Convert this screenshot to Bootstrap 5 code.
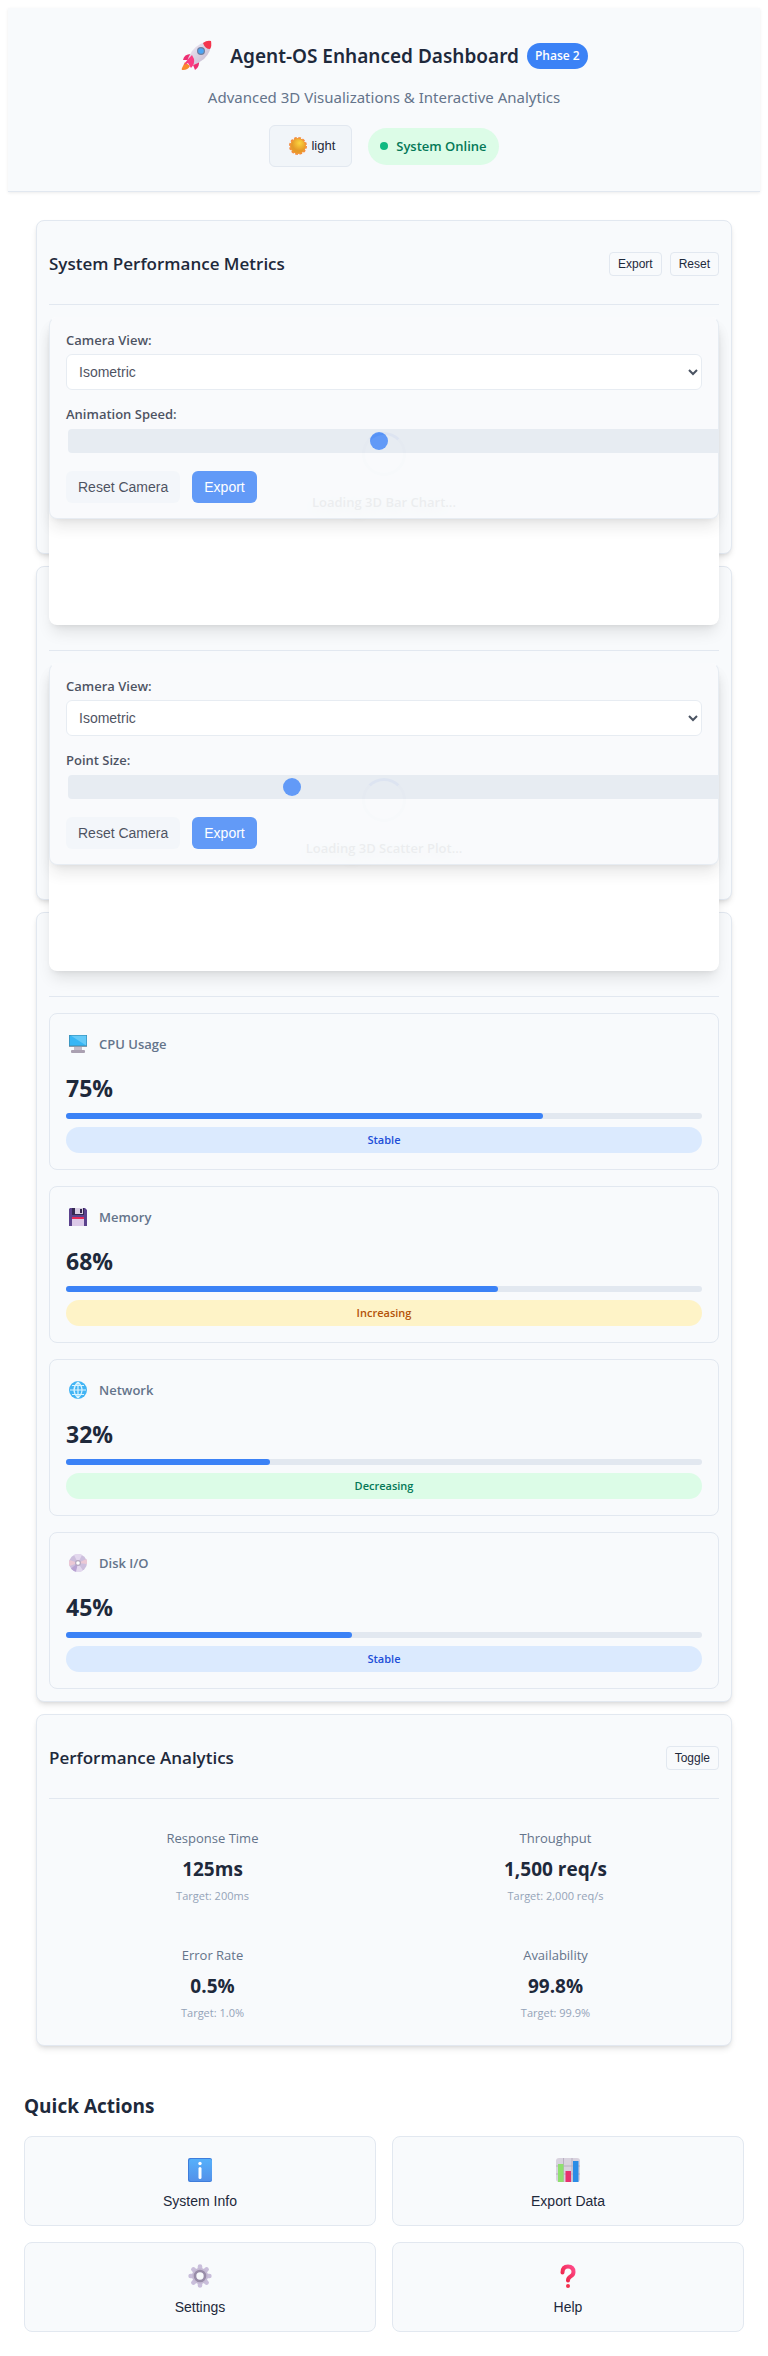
<!DOCTYPE html>
<html lang="en">
<head>
<meta charset="utf-8">
<meta name="viewport" content="width=device-width, initial-scale=1">
<title>Agent-OS Enhanced Dashboard</title>
<link href="https://cdn.jsdelivr.net/npm/bootstrap@5.3.0/dist/css/bootstrap.min.css" rel="stylesheet">
<style>
  :root { --line: #e2e8f0; --surface: #f8fafc; --ink: #1e293b; --muted: #64748b; --accent: #3b82f6; }
  body { background: #fff; color: var(--ink); font-family: "Open Sans", "Noto Sans", sans-serif; font-size: 14px; line-height: 20px; }
  button, select { font-family: "Liberation Sans", Arial, sans-serif; }
  h1, h2, h3, p { margin: 0; }
  svg { display: block; flex: none; }

  .page-header { background: var(--surface); border-bottom: 1px solid var(--line); box-shadow: 0 1px 3px rgba(0,0,0,.08); padding: 32px 16px 24px; }
  .page-title { font-family: "Noto Sans", sans-serif; font-size: 19px; line-height: 32px; font-weight: 600; }
  .phase { background: var(--accent); color: #fff; font-size: 12px; line-height: 18px; font-weight: 600; padding: 4px 8px; border-radius: 13px; }
  .subtitle { font-family: "Noto Sans", sans-serif; color: var(--muted); font-size: 15px; line-height: 24px; margin: 13px 0 16px; }
  .theme-btn { background: #f1f5f9; border: 1px solid var(--line); border-radius: 6px; color: var(--ink); font-size: 13px; height: 42px; padding: 0 16px 0 19px; }
  .status { background: #dcfce7; color: #047857; font-size: 13px; font-weight: 600; height: 37px; padding: 0 12px; border-radius: 19px; }
  .status i { width: 8px; height: 8px; border-radius: 50%; background: #10b981; }

  .panels { padding: 28px 28px 0; gap: 12px; }
  .panel { background: var(--surface); border: 1px solid var(--line); border-radius: 8px; padding: 12px; box-shadow: 0 4px 6px -1px rgba(0,0,0,.1), 0 2px 4px -2px rgba(0,0,0,.1); }
  .panel-head { height: 72px; padding-bottom: 9px; border-bottom: 1px solid var(--line); }
  .panel-head h2 { font-size: 17px; line-height: 24px; font-weight: 600; }
  .tool-btn { background: var(--surface); border: 1px solid var(--line); border-radius: 4px; color: var(--ink); font-size: 12px; height: 24px; padding: 0 8px; }

  .chart-slot { height: 224px; margin-top: 12px; }
  .stage { position: relative; z-index: 1; height: 308px; background: #fff; border-radius: 8px; box-shadow: 0 10px 15px -3px rgba(0,0,0,.1), 0 4px 6px -4px rgba(0,0,0,.1); }
  .loader { position: absolute; inset: 0; padding-top: 115px; color: #bbb; font-size: 13px; font-weight: 600; gap: 16px; }
  .ring { width: 44px; height: 44px; border: 3px solid #f3f5f9; border-top-color: #cbd8f6; border-radius: 50%; }
  .loader span { text-shadow: 0 4px 12px rgba(0,0,0,.2); }
  .controls { position: relative; opacity: .8; background: var(--surface); border: 1px solid var(--line); border-top-color: var(--surface); border-radius: 8px; padding: 12px 16px 15px; overflow: hidden; box-shadow: 0 10px 15px -3px rgba(0,0,0,.12), 0 4px 6px -4px rgba(0,0,0,.1); }
  .controls label { display: block; font-size: 13px; line-height: 20px; font-weight: 600; margin-bottom: 4px; }
  .controls select { display: block; width: 100%; height: 36px; background: #fff; border: 1px solid var(--line); border-radius: 6px; color: var(--ink); font-size: 14px; padding: 0 8px; margin-bottom: 14px; }
  .controls input { -webkit-appearance: none; appearance: none; display: block; width: calc(100% + 18px); height: 24px; background: var(--line); border-radius: 4px; padding: 0 9px; margin: 5px 2px 18px; }
  .controls input::-webkit-slider-thumb { -webkit-appearance: none; width: 18px; height: 18px; border-radius: 50%; background: var(--accent); }
  .cam-row { gap: 12px; }
  .cam-btn { border: 0; border-radius: 6px; height: 32px; padding: 0 12px; font-size: 14px; background: #f1f5f9; color: var(--ink); }
  .cam-btn.go { background: var(--accent); color: #fff; }

  .stack { display: grid; gap: 16px; margin-top: 16px; }
  .metric { border: 1px solid var(--line); border-radius: 8px; padding: 16px; }
  .metric-head { height: 28px; gap: 12px; padding-left: 3px; color: var(--muted); font-weight: 600; font-size: 13px; }
  .metric-value { font-size: 23px; line-height: 38px; font-weight: 700; margin: 11px 0 6px; }
  .meter { height: 6px; background: var(--line); border-radius: 3px; margin-bottom: 8px; }
  .meter div { height: 6px; background: var(--accent); border-radius: 3px; }
  .trend { border-radius: 13px; font-size: 11px; line-height: 26px; font-weight: 600; text-align: center; }
  .steady { background: #dbeafe; color: #1d4ed8; }
  .rising { background: #fef3c7; color: #b45309; }
  .falling { background: #dcfce7; color: #047857; }

  .stat { padding: 12px; text-align: center; }
  .stat-name { color: var(--muted); font-size: 13px; line-height: 22px; margin-bottom: 4px; }
  .stat-value { font-size: 19px; line-height: 32px; font-weight: 700; margin-bottom: 2px; }
  .stat-goal { color: #94a3b8; font-size: 11px; line-height: 17px; }

  .actions { padding: 44px 16px 16px; }
  .actions h2 { font-size: 19px; line-height: 32px; font-weight: 700; margin-bottom: 14px; }
  .two-up { display: grid; grid-template-columns: 1fr 1fr; gap: 16px; }
  .action { background: var(--surface); border: 1px solid var(--line); border-radius: 8px; color: var(--ink); font-size: 14px; line-height: 20px; height: 90px; padding: 21px 0 0; gap: 9px; }
</style>
</head>
<body class="p-2">
<header class="page-header d-flex flex-column align-items-center">
  <div class="d-flex align-items-center">
    <svg width="34" height="32" viewBox="0 0 34 32" class="me-3">
      <defs><linearGradient id="hull" x1="0" y1="0" x2="1" y2="1"><stop stop-color="#f4eef8"/><stop offset="1" stop-color="#bfb4cb"/></linearGradient></defs>
      <path d="M5 22 L2 28 Q1 30 3 30 Q8 30 10 26 Z" fill="#f98a2c"/>
      <path d="M11 14 Q4 14 3 20 L8 20 Z M19 20 Q20 27 15 30 L13 25 Z" fill="#ed2f72"/>
      <path d="M31 1 Q19 2 12 11 Q8 17 7 22 L11 26 Q18 24 24 19 Q32 11 31 1Z" fill="url(#hull)"/>
      <path d="M31 1 Q27 0 23 3 Q25 9 30 9 Q32 6 31 1Z" fill="#f4354d"/>
      <path d="M12 15 Q6 21 4 25 L8 23 L11 28 Q15 24 14 19Z" fill="#fb3b83"/>
      <circle cx="21" cy="11" r="4" fill="#6e7f9f"/><circle cx="21" cy="11" r="2.800" fill="#4ba5f5"/>
    </svg>
    <h1 class="page-title">Agent-OS Enhanced Dashboard</h1>
    <span class="phase ms-2">Phase 2</span>
  </div>
  <p class="subtitle">Advanced 3D Visualizations &amp; Interactive Analytics</p>
  <div class="d-flex align-items-center gap-3">
    <button type="button" class="theme-btn d-flex align-items-center gap-1">
      <svg width="18" height="18" viewBox="0 0 18 18"><defs><radialGradient id="sun" cx=".6" cy=".3"><stop stop-color="#fcd53f"/><stop offset="1" stop-color="#e59a28"/></radialGradient></defs><circle cx="9" cy="9" r="8" fill="none" stroke="#f48a3d" stroke-width="2" stroke-dasharray="2.6 1.6"/><circle cx="9" cy="9" r="7.500" fill="url(#sun)" stroke="#f39a36"/></svg>
      light
    </button>
    <div class="status d-flex align-items-center gap-2"><i></i>System Online</div>
  </div>
</header>

<main>
  <div class="panels d-grid">
    <section class="panel">
      <div class="panel-head d-flex align-items-center justify-content-between">
        <h2>System Performance Metrics</h2>
        <div class="d-flex gap-2"><button type="button" class="tool-btn">Export</button><button type="button" class="tool-btn">Reset</button></div>
      </div>
      <div class="chart-slot"><div class="stage">
        <div class="loader d-flex flex-column align-items-center"><div class="ring"></div><span>Loading 3D Bar Chart...</span></div>
        <div class="controls">
          <label for="bar-view">Camera View:</label>
          <select id="bar-view"><option>Isometric</option></select>
          <label for="bar-speed">Animation Speed:</label>
          <input id="bar-speed" type="range" min="0.1" max="2" step="0.1" value="1">
          <div class="cam-row d-flex"><button type="button" class="cam-btn">Reset Camera</button><button type="button" class="cam-btn go">Export</button></div>
        </div>
      </div></div>
    </section>

    <section class="panel">
      <div class="panel-head"></div>
      <div class="chart-slot"><div class="stage">
        <div class="loader d-flex flex-column align-items-center"><div class="ring"></div><span>Loading 3D Scatter Plot...</span></div>
        <div class="controls">
          <label for="plot-view">Camera View:</label>
          <select id="plot-view"><option>Isometric</option></select>
          <label for="plot-size">Point Size:</label>
          <input id="plot-size" type="range" min="1" max="10" value="4">
          <div class="cam-row d-flex"><button type="button" class="cam-btn">Reset Camera</button><button type="button" class="cam-btn go">Export</button></div>
        </div>
      </div></div>
    </section>

    <section class="panel">
      <div class="panel-head"></div>
      <div class="stack">
        <article class="metric">
          <div class="metric-head d-flex align-items-center">
            <svg width="18" height="18" viewBox="0 0 18 18"><path d="M5 12h8v3H5z" fill="#c3bcc9"/><rect x="2" y="15" width="14" height="3" rx="1" fill="#aaa0b1"/><path d="M0 0h18v11H0z" fill="#3d91b8"/><path d="M.8.8h16.4v9.6H.8z" fill="#38b6f5"/><path d="M2 .8h15.2v9.6z" fill="#65caf8"/><path d="M0 11h18v1H0z" fill="#8a9aab"/></svg>
            CPU Usage
          </div>
          <div class="metric-value">75%</div>
          <div class="meter"><div style="width:75%"></div></div>
          <div class="trend steady">Stable</div>
        </article>
        <article class="metric">
          <div class="metric-head d-flex align-items-center">
            <svg width="18" height="18" viewBox="0 0 18 18"><path d="M1 0h15l2 2v16H0V1z" fill="#5b428d"/><path d="M3 0h12v7H3z" fill="#342952"/><path d="M6 0h8v6H6z" fill="#d9cfe4"/><path d="M11 1h2v4h-2z" fill="#35294f"/><path d="M3 9h12v9H3z" fill="#dcc9e8"/><path d="M3 9h12v2H3z" fill="#e52b57"/></svg>
            Memory
          </div>
          <div class="metric-value">68%</div>
          <div class="meter"><div style="width:68%"></div></div>
          <div class="trend rising">Increasing</div>
        </article>
        <article class="metric">
          <div class="metric-head d-flex align-items-center">
            <svg width="18" height="18" viewBox="0 0 18 18"><circle cx="9" cy="9" r="9" fill="#42b4f4"/><path d="M9 1v16M1 9h16M3 4.500h12M3 13.500h12M9 1Q1 9 9 17M9 1Q17 9 9 17" fill="none" stroke="#d9f4ff" stroke-width="1.200"/></svg>
            Network
          </div>
          <div class="metric-value">32%</div>
          <div class="meter"><div style="width:32%"></div></div>
          <div class="trend falling">Decreasing</div>
        </article>
        <article class="metric">
          <div class="metric-head d-flex align-items-center">
            <svg width="18" height="18" viewBox="0 0 18 18"><circle cx="9" cy="9" r="9" fill="#cdbfdd"/><path d="M9 9 5 .9A9 9 0 0 1 13 .9ZM9 9l5 7.500A9 9 0 0 1 6 17.500Z" fill="#e3d8ee"/><path d="M9 9 .5 6A9 9 0 0 0 .5 12ZM9 9l8.500-4a9 9 0 0 1 .4 5Z" fill="#ebc8d5"/><path d="M9 9 2 14.600A9 9 0 0 0 7 17.800Z" fill="#b9a3d3"/><circle cx="9" cy="9" r="3" fill="#b5a9bf"/><circle cx="9" cy="9" r="1.800" fill="#fff"/></svg>
            Disk I/O
          </div>
          <div class="metric-value">45%</div>
          <div class="meter"><div style="width:45%"></div></div>
          <div class="trend steady">Stable</div>
        </article>
      </div>
    </section>

    <section class="panel">
      <div class="panel-head d-flex align-items-center justify-content-between">
        <h2>Performance Analytics</h2>
        <button type="button" class="tool-btn">Toggle</button>
      </div>
      <div class="two-up mt-3">
        <div class="stat"><div class="stat-name">Response Time</div><div class="stat-value">125ms</div><div class="stat-goal">Target: 200ms</div></div>
        <div class="stat"><div class="stat-name">Throughput</div><div class="stat-value">1,500 req/s</div><div class="stat-goal">Target: 2,000 req/s</div></div>
        <div class="stat"><div class="stat-name">Error Rate</div><div class="stat-value">0.5%</div><div class="stat-goal">Target: 1.0%</div></div>
        <div class="stat"><div class="stat-name">Availability</div><div class="stat-value">99.8%</div><div class="stat-goal">Target: 99.9%</div></div>
      </div>
    </section>
  </div>

  <section class="actions">
    <h2>Quick Actions</h2>
    <div class="two-up">
      <button type="button" class="action d-flex flex-column align-items-center">
        <svg width="24" height="24" viewBox="0 0 24 24"><defs><linearGradient id="tile" x2="0" y2="1"><stop stop-color="#55b0fb"/><stop offset="1" stop-color="#5491e9"/></linearGradient></defs><rect width="24" height="24" rx="2" fill="#3e7ddb"/><rect x="1" y="1" width="23" height="22" rx="2" fill="url(#tile)"/><circle cx="12" cy="5.500" r="1.700" fill="#fff"/><rect x="10.500" y="9" width="3" height="12" rx="1.500" fill="#fff"/></svg>
        System Info
      </button>
      <button type="button" class="action d-flex flex-column align-items-center">
        <svg width="24" height="24" viewBox="0 0 24 24"><rect width="24" height="24" rx="3" fill="#d9d3df"/><path d="M7.500 0v24M16 0v24M0 8h24M0 16h24" stroke="#b9b1c2"/><path d="M2 6h5.500v18H2z" fill="#8fe070"/><path d="M9.500 13h5.500v11H9.500z" fill="#e7336e"/><path d="M17 3h5.500v21H17z" fill="#2b8ce6"/></svg>
        Export Data
      </button>
      <button type="button" class="action d-flex flex-column align-items-center">
        <svg width="24" height="24" viewBox="0 0 24 24"><g stroke="#c9bedb" stroke-width="4.600" stroke-linecap="round"><path d="M12 2.600v18.800M2.600 12h18.800M5.400 5.400l13.200 13.200M18.600 5.400 5.400 18.600"/></g><circle cx="12" cy="12" r="8" fill="#c5bad4"/><circle cx="12" cy="12" r="5" fill="#f8fafc" stroke="#998da9" stroke-width="2.600"/></svg>
        Settings
      </button>
      <button type="button" class="action d-flex flex-column align-items-center">
        <svg width="24" height="24" viewBox="0 0 24 24"><defs><linearGradient id="ask" x1="1" x2="0" y2="1"><stop stop-color="#ff4b8b"/><stop offset="1" stop-color="#ea1d3c"/></linearGradient></defs><path d="M6.500 8.500Q6.500 2.500 12 2.500T17.500 8Q17.500 11 14.500 12.500 12 14 12 16.500" fill="none" stroke="url(#ask)" stroke-width="4" stroke-linecap="round"/><circle cx="12" cy="22" r="2" fill="#f3304d"/></svg>
        Help
      </button>
    </div>
  </section>
</main>
<script src="https://cdn.jsdelivr.net/npm/bootstrap@5.3.0/dist/js/bootstrap.bundle.min.js"></script>
</body>
</html>
